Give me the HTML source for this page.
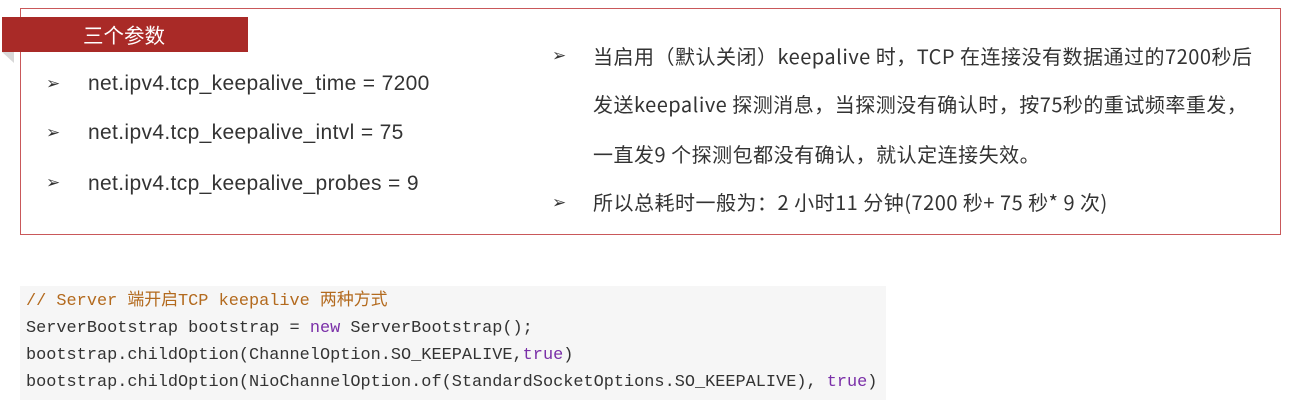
<!DOCTYPE html>
<html><head><meta charset="utf-8"><style>
body{margin:0;width:1301px;height:407px;background:#fff;position:relative;overflow:hidden;font-family:"Liberation Sans","Noto Sans CJK SC",sans-serif;color:#333}
.box{position:absolute;left:20px;top:8px;width:1259px;height:225px;border:1px solid #c9585a}
.rib{position:absolute;left:2px;top:17px;width:246px;height:35px;background:#a92a27;color:#fff;font-size:20.5px;line-height:35px;font-family:"Noto Sans CJK SC",sans-serif}
.rib span{position:absolute;left:81px}
.tri{position:absolute;left:2px;top:52px;width:0;height:0;border-top:11px solid #d8d8d8;border-left:12px solid transparent}
.t{position:absolute;white-space:nowrap;font-size:21px;letter-spacing:0.35px;line-height:24px}
.r{font-size:20px;letter-spacing:0.5px;font-family:"Noto Sans CJK SC",sans-serif;line-height:24px}
.a{position:absolute;font-size:17px;color:#333;font-family:"DejaVu Sans",sans-serif}
.code{position:absolute;left:20px;top:286px;width:866px;height:114px;background:#f6f6f6}
.c{position:absolute;left:26px;white-space:nowrap;font-family:"Liberation Mono","Noto Sans CJK SC",monospace;font-size:16.9px;color:#333;line-height:20px}
.k{color:#7a2fa8}.cm{color:#b36a1e}
</style></head><body>
<div class="box"></div>
<div class="rib"><span>三个参数</span></div>
<div class="tri"></div>
<div class="a" style="left:46px;top:74px">➢</div>
<div class="a" style="left:46px;top:123px">➢</div>
<div class="a" style="left:46px;top:173px">➢</div>
<div class="t" style="left:88px;top:72px">net.ipv4.tcp_keepalive_time = 7200</div>
<div class="t" style="left:88px;top:121px">net.ipv4.tcp_keepalive_intvl = 75</div>
<div class="t" style="left:88px;top:172px">net.ipv4.tcp_keepalive_probes = 9</div>
<div class="a" style="left:552px;top:46px">➢</div>
<div class="a" style="left:552px;top:193px">➢</div>
<div class="t r" style="left:593px;top:44px">当启用（默认关闭）keepalive 时，TCP 在连接没有数据通过的7200秒后</div>
<div class="t r" style="left:593px;top:92px">发送keepalive 探测消息，当探测没有确认时，按75秒的重试频率重发，</div>
<div class="t r" style="left:593px;top:142px">一直发9 个探测包都没有确认，就认定连接失效。</div>
<div class="t r" style="left:593px;top:190px">所以总耗时一般为：2 小时11 分钟(7200 秒+ 75 秒* 9 次)</div>
<div class="code"></div>
<div class="c cm" style="top:292px">// Server 端开启TCP keepalive 两种方式</div>
<div class="c" style="top:319px">ServerBootstrap bootstrap = <span class="k">new</span> ServerBootstrap();</div>
<div class="c" style="top:346px">bootstrap.childOption(ChannelOption.SO_KEEPALIVE,<span class="k">true</span>)</div>
<div class="c" style="top:373px">bootstrap.childOption(NioChannelOption.of(StandardSocketOptions.SO_KEEPALIVE), <span class="k">true</span>)</div>
</body></html>
